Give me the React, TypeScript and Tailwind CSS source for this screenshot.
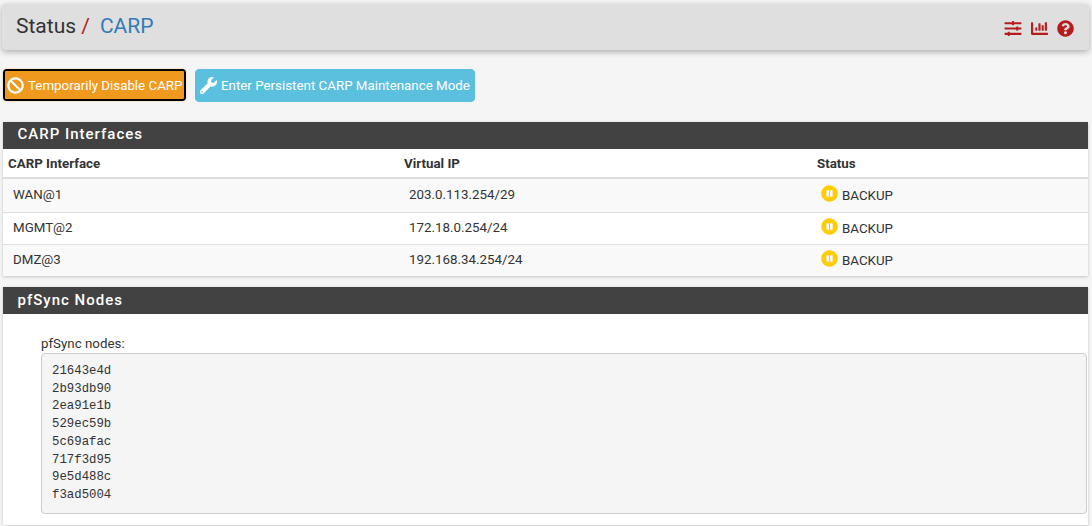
import { FaBan, FaChartBar, FaPauseCircle, FaQuestionCircle, FaSlidersH, FaWrench } from 'react-icons/fa';

const rows = [
  { name: 'WAN@1', ip: '203.0.113.254/29', height: 'h-[33px]' },
  { name: 'MGMT@2', ip: '172.18.0.254/24', height: 'h-[32px]' },
  { name: 'DMZ@3', ip: '192.168.34.254/24', height: 'h-[32px]' },
];

const nodes = ['21643e4d', '2b93db90', '2ea91e1b', '529ec59b', '5c69afac', '717f3d95', '9e5d488c', 'f3ad5004'];

function PanelHeading({ title, className = '' }: { title: string; className?: string }) {
  return (
    <div className={`h-[27px] bg-[#424242] pl-[14.5px] text-[15px] leading-[25px] font-medium tracking-[1px] text-white ${className}`}>
      {title}
    </div>
  );
}

export default function App() {
  return (
    <div className="h-[526px] overflow-hidden bg-[#f5f5f5] px-[3px] pt-1 font-['Roboto',sans-serif] text-[13.33px] text-[#333333]">
      <header className="-ml-px flex h-[46px] w-[1087px] items-center justify-between rounded-sm bg-[#dfdfdf] pr-[15px] pl-[14px] shadow-[0_2px_6px_rgba(0,0,0,0.3)]">
        <h1 className="-mt-[2px] text-[21px] leading-none">
          Status <span className="text-[#b71c1c]">/</span>
          <span className="ml-[10px] text-[#337ab7]">CARP</span>
        </h1>
        <div className="mt-[2px] flex items-center gap-[9px] text-[#b71c1c]">
          <FaSlidersH className="h-[17px] w-[18px]" />
          <FaChartBar className="h-[17px] w-[17px]" />
          <FaQuestionCircle className="h-[17px] w-[17px]" />
        </div>
      </header>

      <div className="mt-[19px] flex gap-[9px]">
        <button className="flex h-[32px] w-[183px] items-center gap-[4px] rounded-[3px] border-2 border-black bg-[#ef9a1f] pt-[1px] pl-[2px] whitespace-nowrap text-white outline outline-1 outline-[#f5e8d2]">
          <FaBan className="-mt-[1px] h-[17px] w-[17px] shrink-0" />
          Temporarily Disable CARP
        </button>
        <button className="flex h-[33px] w-[280px] items-center gap-[4px] rounded-[4px] border border-[#5bc0de] bg-[#5bc0de] pt-[1px] pl-[4px] whitespace-nowrap text-white">
          <FaWrench className="-mt-[1px] h-[17px] w-[17px] shrink-0" />
          Enter Persistent CARP Maintenance Mode
        </button>
      </div>

      <section className="mt-[20px] w-[1085px] bg-white shadow-[0_1px_3px_rgba(0,0,0,0.2)]">
        <PanelHeading title="CARP Interfaces" />
        <div className="grid h-[30px] grid-cols-[396px_413px_1fr] items-center border-b-2 border-[#dddddd] pt-[1px] pl-[5px] font-bold">
          <div>CARP Interface</div>
          <div>Virtual IP</div>
          <div>Status</div>
        </div>
        {rows.map((row, i) => (
          <div
            key={row.name}
            className={`grid ${row.height} grid-cols-[396px_412px_1fr] items-center pb-[1px] pl-[10px] ${
              i % 2 === 0 ? 'bg-[#f9f9f9]' : 'bg-white'
            } ${i > 0 ? 'border-t border-[#dddddd]' : ''}`}
          >
            <div>{row.name}</div>
            <div>{row.ip}</div>
            <div className="flex items-center gap-[4px]">
              <FaPauseCircle className="-mt-[3px] h-[17px] w-[17px] text-[#ffcc00]" />
              <span className="mt-[2px]">BACKUP</span>
            </div>
          </div>
        ))}
      </section>

      <section className="mt-[11px] h-[238px] w-[1085px] bg-white shadow-[0_1px_3px_rgba(0,0,0,0.2)]">
        <PanelHeading title="pfSync Nodes" className="pt-[1px]" />
        <div className="pt-[21px] pr-[1px] pl-[38px]">
          <div className="leading-[18px]">pfSync nodes:</div>
          <pre className="h-[161px] rounded-[4px] border border-[#cccccc] bg-[#f5f5f5] pt-[9px] pl-[10px] font-['Liberation_Mono',monospace] text-[12.35px] leading-[17.7px]">
            {nodes.join('\n')}
          </pre>
        </div>
      </section>
    </div>
  );
}
